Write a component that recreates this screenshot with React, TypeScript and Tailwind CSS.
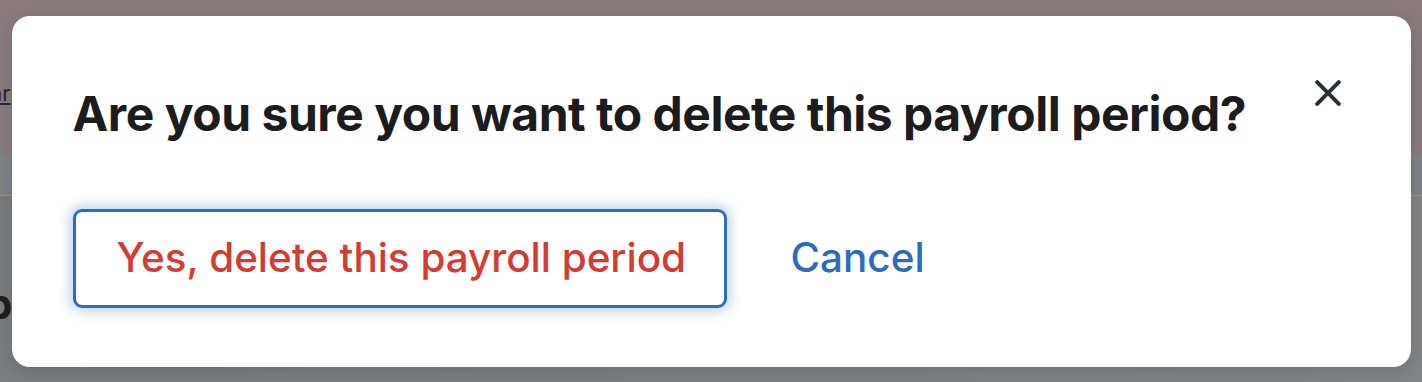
import React from "react";

export default function App() {
  return (
    <div className="relative h-[382px] w-[1422px] overflow-hidden font-['Inter',sans-serif]">
      {/* page behind the dimmed overlay */}
      <div className="flex h-full flex-col">
        <div className="flex h-[155px] items-start bg-[#8a7c7e] pt-[80px]">
          <span className="-ml-[10px] text-[22px] leading-[26px] text-[#2e2829] underline">ar</span>
        </div>
        <div className="h-[41px] border-b border-[#939699] bg-[#7f8488]" />
        <div className="flex-1 bg-gradient-to-r from-[#7a7d7f] to-[#828486] pt-[76px]">
          <span className="-ml-[14px] text-[42px] font-bold text-[#1f1f21]">p</span>
        </div>
      </div>

      {/* modal */}
      <div className="absolute inset-0 flex items-start justify-center pt-[16px]">
        <div className="relative flex h-[351px] w-[1399px] flex-col rounded-[18px] bg-white pl-[61px] pt-[74px] shadow-[0_4px_20px_rgba(0,0,0,0.15)]">
          <button className="absolute right-[70px] top-[64px] text-[#263238]" aria-label="Close">
            <svg width="26" height="26" viewBox="0 0 26 26" fill="none">
              <path d="M2.2 2.2 L23.8 23.8 M23.8 2.2 L2.2 23.8" stroke="currentColor" strokeWidth="4" strokeLinecap="round" />
            </svg>
          </button>
          <h2 className="text-[48px] font-bold leading-none tracking-[-0.01em] text-[#1c1c1e]">
            Are you sure you want to delete this payroll period?
          </h2>
          <div className="mt-[71px] flex items-center gap-[64px]">
            <button className="flex h-[99px] w-[654px] items-center rounded-[9px] border-[3px] border-[#2f6bc1] pl-[41px] text-[40.4px] font-medium text-[#d63a34] shadow-[0_0_12px_4px_rgba(47,107,193,0.28)]">
              Yes, delete this payroll period
            </button>
            <button className="text-[40.4px] font-medium text-[#2e6bc0]">Cancel</button>
          </div>
        </div>
      </div>
    </div>
  );
}
